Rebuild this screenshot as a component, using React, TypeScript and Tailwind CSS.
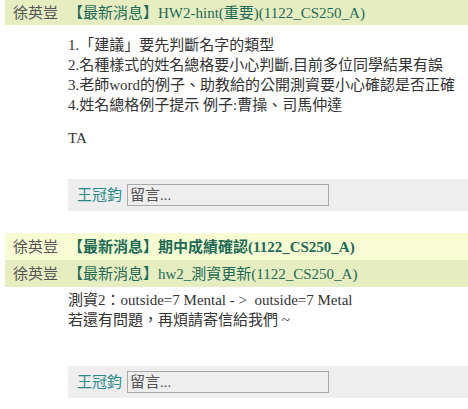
import React from "react";

type Post = {
  title: string;
  bold?: boolean;
  unread?: boolean;
};

const FONT = "font-['Liberation_Serif','Noto_Sans_CJK_TC',serif]";

const PostHeader: React.FC<Post & { tall?: boolean }> = ({ title, bold, unread, tall }) => (
  <div
    className={`flex items-center ${tall ? "h-[27px]" : "h-[25px]"} ${
      unread ? "bg-[#f8fcd3]" : "bg-[#e6edc1]"
    }`}
  >
    <span className="w-[63px] pl-[8px] text-[15px] text-[#555555]">徐英豈</span>
    <span className={`text-[15px] text-[#1d6b57] ${bold ? "font-bold" : ""}`}>{title}</span>
  </div>
);

const CommentBox: React.FC = () => (
  <div className="ml-[63px] flex h-[32px] items-center bg-[#eeeeee] pl-[9px]">
    <span className="mr-[5px] text-[15px] text-[#2a8a87]">王冠鈞</span>
    <input
      className="h-[22px] w-[202px] border border-[#a9a9a9] bg-[#eeeeee] px-[2px] text-[15px] text-[#333] placeholder:text-[#555]"
      placeholder="留言..."
    />
  </div>
);

export default function App() {
  return (
    <div className={`${FONT} bg-white pl-[5px] text-[15px] leading-[20px] text-[#333333]`}>
      {/* first post */}
      <PostHeader title="【最新消息】HW2-hint(重要)(1122_CS250_A)" />
      <div className="pl-[63px] pt-[10px]">
        <p>1.「建議」要先判斷名字的類型</p>
        <p>2.名種樣式的姓名總格要小心判斷,目前多位同學結果有誤</p>
        <p>3.老師word的例子、助教給的公開測資要小心確認是否正確</p>
        <p>4.姓名總格例子提示 例子:曹操、司馬仲達</p>
        <p className="mt-[13px]">TA</p>
      </div>
      <div className="mt-[31px]">
        <CommentBox />
      </div>

      {/* second + third posts */}
      <div className="mt-[22px]">
        <PostHeader title="【最新消息】期中成績確認(1122_CS250_A)" bold unread tall />
        <PostHeader title="【最新消息】hw2_測資更新(1122_CS250_A)" tall />
      </div>
      <div className="pl-[63px] pt-[3px]">
        <p>測資2：outside=7 Mental - &gt;&nbsp; outside=7 Metal</p>
        <p>若還有問題，再煩請寄信給我們 ~</p>
      </div>
      <div className="mt-[36px] pb-[12px]">
        <CommentBox />
      </div>
    </div>
  );
}
